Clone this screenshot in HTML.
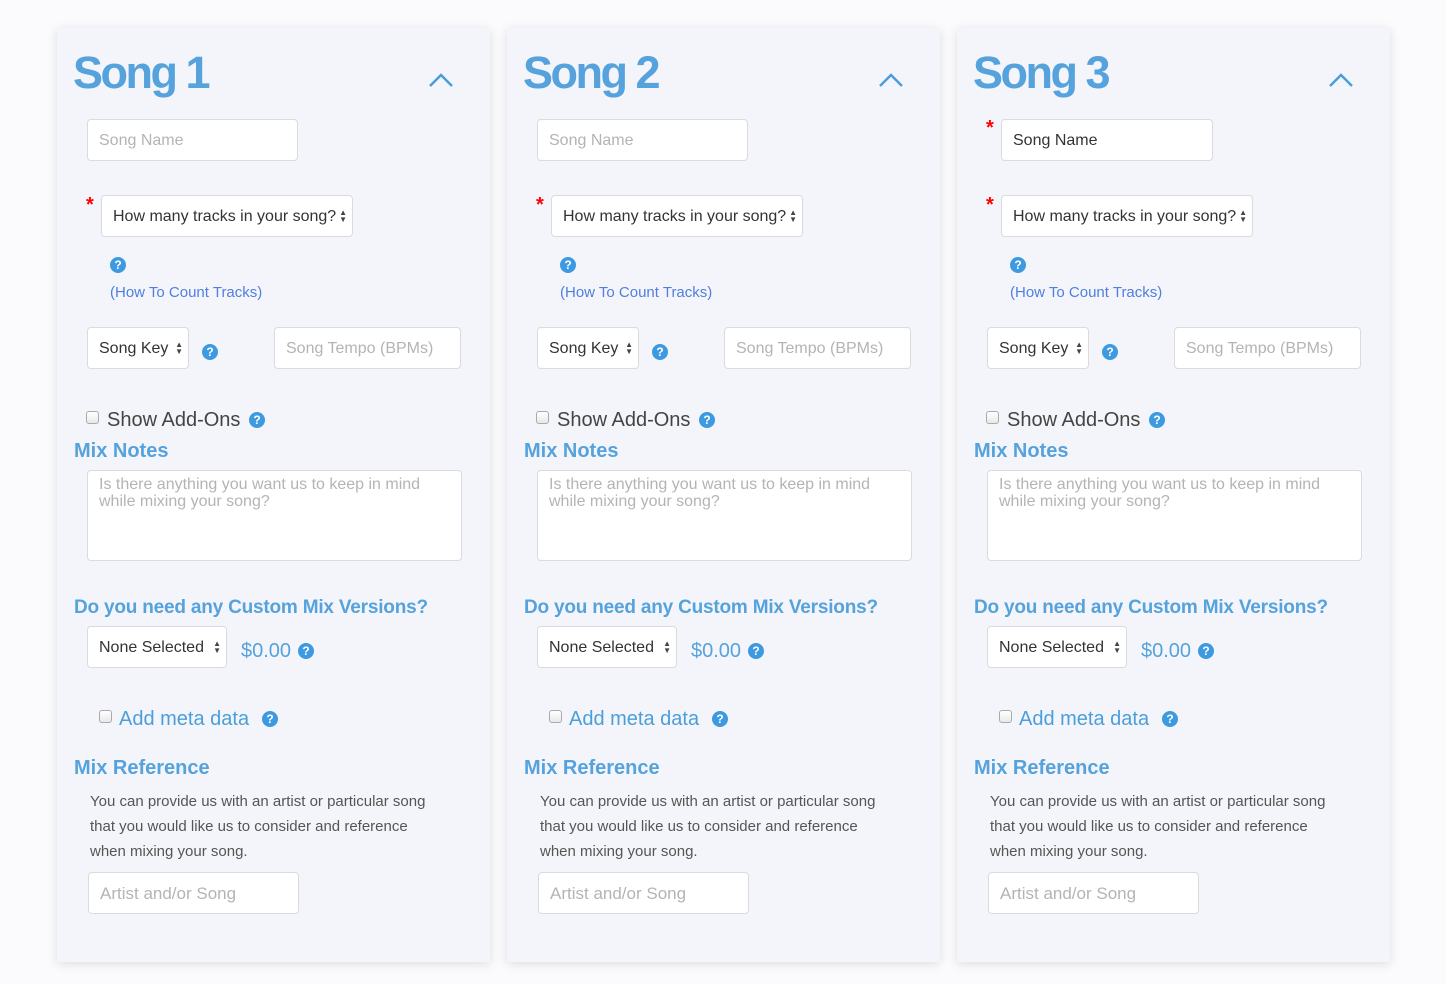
<!DOCTYPE html>
<html><head><meta charset="utf-8"><style>
*{box-sizing:border-box;margin:0;padding:0}
body{width:1446px;height:984px;background:#fbfbfd;font-family:"Liberation Sans",sans-serif;position:relative;overflow:hidden}
.p{position:absolute;top:28px;width:433px;height:934px;background:#f4f5fa;box-shadow:0 2px 10px rgba(0,0,0,.12)}
.a{position:absolute}
.t{left:16px;top:22px;font-size:45px;font-weight:bold;color:#55a2dc;letter-spacing:-2.5px;line-height:1}
.in{background:#fff;border:1px solid #d9dbe0;border-radius:4px;height:42px;font-size:16px;color:#b4b4b4;padding-left:11px;line-height:42px;white-space:nowrap;overflow:hidden}
.dk{color:#333}
.arr{position:absolute;right:5px;top:13px;font-size:8px;line-height:7px;color:#444;background:#fff;padding-left:2px}
.q{width:16px;height:16px;border-radius:50%;background:#3d9ae0;color:#fff;font-size:12px;font-weight:bold;text-align:center;line-height:16px}
.st{color:#f00;font-size:20px;font-weight:bold}
.h{font-size:20px;font-weight:bold;color:#55a2dc;line-height:1}
.cb{width:13px;height:13px;border:1px solid #aaa;border-radius:3px;background:linear-gradient(#fff,#e8e8e8)}
</style></head><body>
<script>
const tpl=(n,x,third)=>`<div class="p" style="left:${x}px">
<div class="a t">Song ${n}</div>
<svg class="a" style="left:371px;top:44px" width="26" height="16"><path d="M2 14 L13 3 L24 14" fill="none" stroke="#4a9edb" stroke-width="2.5"/></svg>
${third?`<div class="a st" style="left:29px;top:89px">*</div><div class="a in dk" style="left:44px;top:91px;width:212px">Song Name</div>`:`<div class="a in" style="left:30px;top:91px;width:211px">Song Name</div>`}
<div class="a st" style="left:29px;top:166px">*</div>
<div class="a in dk" style="left:44px;top:167px;width:252px;padding-right:18px">How many tracks in your song?<div class="arr">▲<br>▼</div></div>
<div class="a q" style="left:53px;top:229px">?</div>
<div class="a" style="left:53px;top:256px;font-size:15px;color:#4f7fdf">(How To Count Tracks)</div>
<div class="a in dk" style="left:30px;top:299px;width:102px">Song Key<div class="arr">▲<br>▼</div></div>
<div class="a q" style="left:145px;top:316px">?</div>
<div class="a in" style="left:217px;top:299px;width:187px">Song Tempo (BPMs)</div>
<div class="a cb" style="left:29px;top:383px"></div>
<div class="a" style="left:50px;top:381px;font-size:20px;color:#444">Show Add-Ons</div>
<div class="a q" style="left:192px;top:384px">?</div>
<div class="a h" style="left:17px;top:413px">Mix Notes</div>
<div class="a in" style="left:30px;top:442px;width:375px;height:91px;line-height:17px;padding-top:5px;padding-right:22px;font-size:16px;white-space:normal">Is there anything you want us to keep in mind while mixing your song?</div>
<div class="a h" style="left:17px;top:570px;font-size:19px;letter-spacing:-0.2px">Do you need any Custom Mix Versions?</div>
<div class="a in dk" style="left:30px;top:598px;width:140px">None Selected<div class="arr">▲<br>▼</div></div>
<div class="a" style="left:184px;top:612px;font-size:20px;color:#55a2dc">$0.00</div>
<div class="a q" style="left:241px;top:615px">?</div>
<div class="a cb" style="left:42px;top:682px"></div>
<div class="a" style="left:62px;top:680px;font-size:20px;color:#4a9edb">Add meta data</div>
<div class="a q" style="left:205px;top:683px">?</div>
<div class="a h" style="left:17px;top:730px">Mix Reference</div>
<div class="a" style="left:33px;top:761px;font-size:15px;line-height:25px;color:#555;width:350px">You can provide us with an artist or particular song that you would like us to consider and reference when mixing your song.</div>
<div class="a in" style="left:31px;top:844px;width:211px;font-size:17px">Artist and/or Song</div>
</div>`;
document.write(tpl(1,57,0)+tpl(2,507,0)+tpl(3,957,1));
</script>
</body></html>
